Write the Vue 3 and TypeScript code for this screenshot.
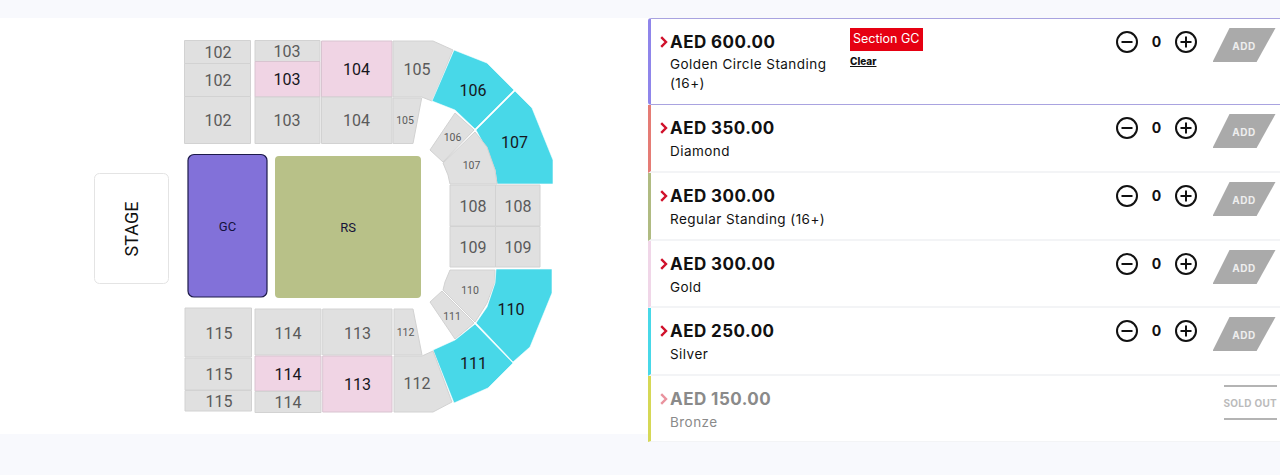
<script setup lang="ts">
interface Poly { pts: string; fill: 'g' | 'p' | 'b'; label: string; x: number; y: number; small?: boolean }
interface Tier { price: string; name: string; color: string; height: number; selected?: boolean; soldOut?: boolean }

function rect(x1: number, y1: number, x2: number, y2: number): string {
  return `${x1},${y1} ${x2},${y1} ${x2},${y2} ${x1},${y2}`
}

const sections: Poly[] = [
  { pts: rect(184.5, 40.5, 250.5, 63.5), fill: 'g', label: '102', x: 218, y: 52.5 },
  { pts: rect(184.5, 63.5, 250.5, 96.5), fill: 'g', label: '102', x: 218, y: 80.5 },
  { pts: rect(184.5, 96.5, 250.5, 143.5), fill: 'g', label: '102', x: 218, y: 120 },
  { pts: rect(255, 40.5, 320, 61.5), fill: 'g', label: '103', x: 287, y: 51 },
  { pts: rect(255, 61.5, 320, 97), fill: 'p', label: '103', x: 287, y: 79 },
  { pts: rect(255, 97, 320, 143.5), fill: 'g', label: '103', x: 287, y: 120 },
  { pts: rect(321.5, 41, 392, 97), fill: 'p', label: '104', x: 356.5, y: 69 },
  { pts: rect(321.5, 97, 392, 143.5), fill: 'g', label: '104', x: 356.5, y: 120 },
  { pts: '393,41 433,41 453,50 432,101 421.7,97 393,97', fill: 'g', label: '105', x: 417, y: 69 },
  { pts: '393,98 421.7,98 413,143.5 393,143.5', fill: 'g', label: '105', x: 405, y: 120, small: true },
  { pts: '454,50 487,63 514,90 475,129 455,110 432,101', fill: 'b', label: '106', x: 473, y: 90 },
  { pts: '515,91 532,108 553,160 553,184 497,184 495,170 487,150 476,130', fill: 'b', label: '107', x: 514.5, y: 142 },
  { pts: '455,113 474,130 443,162 430,150', fill: 'g', label: '106', x: 452.5, y: 137, small: true },
  { pts: '475,132 487,147 495,170 497,184 450,184 448,175 443,163', fill: 'g', label: '107', x: 471.5, y: 165, small: true },
  { pts: rect(450, 185, 495.5, 226), fill: 'g', label: '108', x: 473, y: 206 },
  { pts: rect(495.5, 185, 540, 226), fill: 'g', label: '108', x: 518, y: 206 },
  { pts: rect(450, 226.5, 495.5, 267), fill: 'g', label: '109', x: 473, y: 247 },
  { pts: rect(495.5, 226.5, 540, 267), fill: 'g', label: '109', x: 518, y: 247 },
  { pts: '450,270 495,270 495,282 487,303 475,322 443,290 445,282', fill: 'g', label: '110', x: 470, y: 290, small: true },
  { pts: '442,291 474,323 455,339 430,302', fill: 'g', label: '111', x: 452, y: 316, small: true },
  { pts: '496,269 552,269 552,293 530,347 513,362 476,323 487,307 495,283', fill: 'b', label: '110', x: 511, y: 309 },
  { pts: '475,324 513,363 488,388 454,403 433,350 455,340', fill: 'b', label: '111', x: 473.5, y: 363 },
  { pts: '394,309 413,309 422,355 394,355', fill: 'g', label: '112', x: 405.5, y: 332, small: true },
  { pts: '394,356 422,356 433,351 452,402 433,412 394,412', fill: 'g', label: '112', x: 417, y: 383 },
  { pts: rect(322.7, 309, 392, 355), fill: 'g', label: '113', x: 357.5, y: 333 },
  { pts: rect(322.7, 356, 392, 412), fill: 'p', label: '113', x: 357.5, y: 384 },
  { pts: rect(255, 309, 321, 355), fill: 'g', label: '114', x: 288, y: 333 },
  { pts: rect(255, 356, 321, 391), fill: 'p', label: '114', x: 288, y: 374 },
  { pts: rect(255, 391.5, 321, 412.5), fill: 'g', label: '114', x: 288, y: 402 },
  { pts: rect(185, 308, 251.5, 357), fill: 'g', label: '115', x: 219, y: 333 },
  { pts: rect(185, 358, 251.5, 390), fill: 'g', label: '115', x: 219, y: 374 },
  { pts: rect(185, 390.5, 251.5, 411), fill: 'g', label: '115', x: 219, y: 401 },
]

const tiers: Tier[] = [
  { price: 'AED 600.00', name: 'Golden Circle Standing (16+)', color: '#8f85ea', height: 87, selected: true },
  { price: 'AED 350.00', name: 'Diamond', color: '#e57c75', height: 68 },
  { price: 'AED 300.00', name: 'Regular Standing (16+)', color: '#b0bb82', height: 68 },
  { price: 'AED 300.00', name: 'Gold', color: '#f0d6e8', height: 67 },
  { price: 'AED 250.00', name: 'Silver', color: '#48d8e8', height: 68 },
  { price: 'AED 150.00', name: 'Bronze', color: '#d6d856', height: 66, soldOut: true },
]
</script>

<template>
  <div class="page">
    <section class="map">
      <svg class="map-svg" width="648" height="416" viewBox="0 18 648 416" role="img" aria-label="Seating map">
        <rect class="stage" x="94.5" y="173.5" width="74" height="110" rx="5" />
        <text class="stage-text" transform="translate(131.5 229) rotate(-90)">STAGE</text>
        <rect class="gc" x="188" y="154.5" width="79" height="142.5" rx="6" />
        <text class="zone-text" x="227.5" y="226.5">GC</text>
        <rect class="rs" x="275" y="156" width="146" height="142" rx="4" />
        <text class="zone-text" x="348" y="227.5">RS</text>
        <g v-for="(s, i) in sections" :key="i">
          <polygon :points="s.pts" :class="['sec', 'sec-' + s.fill]" />
          <text :x="s.x" :y="s.y" :class="['lbl', s.fill === 'g' ? 'lbl-g' : 'lbl-d', s.small ? 'lbl-s' : '']">{{ s.label }}</text>
        </g>
      </svg>
    </section>

    <section class="list">
      <article
        v-for="t in tiers"
        :key="t.price + t.name"
        class="row"
        :class="{ selected: t.selected, sold: t.soldOut }"
        :style="{ height: t.height + 'px', borderLeftColor: t.color }"
      >
        <svg class="chev" width="8" height="12" viewBox="0 0 8 12">
          <path d="M1.2 1.2 L6 6 L1.2 10.8" fill="none" stroke="#d0112b" stroke-width="2.4" />
        </svg>
        <div class="info">
          <div class="price">{{ t.price }}</div>
          <div class="name">{{ t.name }}</div>
        </div>
        <div v-if="t.selected" class="badge-wrap">
          <div class="badge">Section GC</div>
          <a class="clear">Clear</a>
        </div>
        <div v-if="!t.soldOut" class="actions">
          <svg class="round" width="24" height="24" viewBox="0 0 24 24">
            <circle cx="12" cy="12" r="10" fill="none" stroke="#111" stroke-width="2" />
            <path d="M6.5 12 H17.5" stroke="#111" stroke-width="2" />
          </svg>
          <span class="qty">0</span>
          <svg class="round" width="24" height="24" viewBox="0 0 24 24">
            <circle cx="12" cy="12" r="10" fill="none" stroke="#111" stroke-width="2" />
            <path d="M6.5 12 H17.5 M12 6.5 V17.5" stroke="#111" stroke-width="2" />
          </svg>
          <button class="add" type="button"><span>ADD</span></button>
        </div>
        <div v-else class="soldout">SOLD OUT</div>
      </article>
    </section>
  </div>
</template>

<style>
html, body { margin: 0; background: #f8f9fd; }
</style>

<style scoped>
.page {
  width: 1280px;
  height: 475px;
  box-sizing: border-box;
  padding-top: 18px;
  display: flex;
  align-items: flex-start;
  background: #f8f9fd;
  overflow: hidden;
}
.map { width: 648px; height: 416px; background: #fff; flex: none; }
.map-svg { display: block; }
.stage { fill: #fff; stroke: #e4e4e4; stroke-width: 1; }
.stage-text { font: 400 18px Roboto, sans-serif; fill: #111; text-anchor: middle; dominant-baseline: central; }
.gc { fill: #8271d9; stroke: #1d1a4a; stroke-width: 1.2; }
.rs { fill: #b8c188; }
.zone-text { font: 400 13px Roboto, sans-serif; fill: #14123a; text-anchor: middle; dominant-baseline: central; }
.sec { stroke-width: 1; }
.sec-g { fill: #e0e0e0; stroke: #d2d2d2; }
.sec-p { fill: #f0d4e4; stroke: #d8c4d0; }
.sec-b { fill: #48d8e8; stroke: #fff; stroke-width: 0.6; }
.lbl { font: 400 16px Roboto, sans-serif; text-anchor: middle; dominant-baseline: central; }
.lbl-g { fill: #5a5a5a; }
.lbl-d { fill: #16161c; }
.lbl-s { font-size: 10.5px; }

.list { width: 632px; flex: none; display: flex; flex-direction: column; background: #fff; }
.row {
  box-sizing: border-box;
  position: relative;
  display: flex;
  align-items: flex-start;
  padding: 13px 0 0 8.5px;
  border-left: 3.5px solid #000;
  border-bottom: 2px solid #f3f4f6;
  font-family: Inter, "Liberation Sans", sans-serif;
  color: #111;
}
.row.selected {
  border-top: 1px solid #a9a3e0;
  border-bottom: 1px solid #a9a3e0;
  border-top-left-radius: 3px;
  border-bottom-left-radius: 3px;
}
.row.sold { border-bottom: 1px solid #f3f4f6; }
.chev { margin-top: 4px; flex: none; }
.info { margin-left: 2.5px; width: 176px; flex: none; }
.price { font-weight: 700; font-size: 17px; line-height: 20px; letter-spacing: 0.45px; white-space: nowrap; }
.name { margin-top: 4px; font-size: 13.5px; line-height: 19px; letter-spacing: 0.45px; }
.selected .name { margin-top: 3px; }
.badge-wrap { margin-left: 4px; margin-top: -4px; }
.badge {
  width: 72.5px;
  height: 23px;
  background: #e60012;
  color: #fff;
  font-size: 12.5px;
  line-height: 22px;
  text-align: center;
  white-space: nowrap;
}
.clear {
  display: block;
  margin-top: 4px;
  font-size: 10px;
  font-weight: 800;
  line-height: 12px;
  text-decoration: underline;
  color: #111;
}
.actions {
  position: absolute;
  right: 4.5px;
  top: 9px;
  display: flex;
  align-items: flex-start;
}
.round { display: block; margin-top: 2px; }
.qty { width: 35px; text-align: center; text-indent: 1px; font-size: 14px; font-weight: 700; line-height: 28px; }
.add {
  width: 63px;
  height: 34px;
  margin-left: 15px;
  padding: 1px 0 0;
  border: 0;
  background: #aaa;
  clip-path: polygon(27% 0, 100% 0, 70% 100%, 0 100%);
  color: #eee;
  font: 700 10px Inter, sans-serif;
  letter-spacing: 0.5px;
  display: flex;
  align-items: center;
  justify-content: center;
}
.sold .price, .sold .name { color: #8a8a8a; }
.sold .chev { opacity: 0.45; }
.soldout {
  position: absolute;
  right: 3.5px;
  top: 9px;
  width: 53px;
  height: 35px;
  box-sizing: border-box;
  border-top: 2px solid #b4b4b4;
  border-bottom: 2px solid #b4b4b4;
  font-size: 10px;
  font-weight: 700;
  letter-spacing: 0.3px;
  line-height: 33px;
  color: #bbb;
  white-space: nowrap;
  text-align: center;
}
</style>
